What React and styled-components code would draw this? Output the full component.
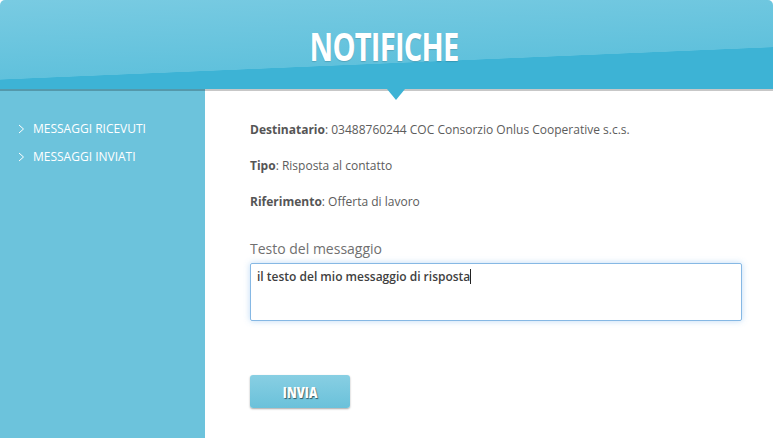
import styled, { createGlobalStyle } from "styled-components";

const Global = createGlobalStyle`
  html, body {
    margin: 0;
    padding: 0;
    background: #ffffff;
    font-family: "Open Sans", "DejaVu Sans", sans-serif;
  }
`;

const Page = styled.div`
  width: 773px;
  height: 438px;
  display: flex;
  flex-direction: column;
  overflow: hidden;
`;

const Header = styled.header`
  position: relative;
  z-index: 1;
  height: 89px;
  flex: none;
  border-radius: 5px 5px 0 0;
  background: linear-gradient(
    177.6deg,
    #79cbe2 0%,
    #60c1dc 65.4%,
    #3db3d5 65.8%,
    #3db3d5 100%
  );
  box-shadow: 0 2px 0 rgba(0, 0, 0, 0.22);
  display: flex;
  align-items: center;
  justify-content: center;
`;

const Title = styled.h1`
  margin: 2px 0 0 -5px;
  color: #ffffff;
  font-family: "Open Sans", sans-serif;
  font-weight: 700;
  font-size: 39px;
  letter-spacing: -1px;
  transform: scaleX(0.745);
  text-shadow: 0 1px 1px rgba(0, 0, 0, 0.15);
`;

const Pointer = styled.span`
  position: absolute;
  left: 387px;
  top: 89px;
  width: 0;
  height: 0;
  border-left: 9px solid transparent;
  border-right: 9px solid transparent;
  border-top: 11px solid #3db3d5;
`;

const Body = styled.div`
  flex: 1;
  display: flex;
`;

const Sidebar = styled.nav`
  width: 205px;
  flex: none;
  background: #6cc3dc;
  padding: 31px 0 0 18px;
  box-sizing: border-box;
  display: flex;
  flex-direction: column;
  gap: 11px;
`;

const NavItem = styled.a`
  display: flex;
  align-items: center;
  gap: 8px;
  color: #ffffff;
  font-size: 12px;
  line-height: 17px;
  font-weight: 500;
  text-transform: uppercase;
  text-decoration: none;
`;

const Chevron = () => (
  <svg width="7" height="10" viewBox="0 0 7 10">
    <path d="M1 1 L5.5 5 L1 9" fill="none" stroke="#ffffff" strokeWidth="1" />
  </svg>
);

const Content = styled.main`
  flex: 1;
  padding: 32px 0 0 45px;
  display: flex;
  flex-direction: column;
  color: #5c5c5c;
`;

const InfoLine = styled.p`
  margin: 0 0 19px;
  font-size: 12px;
  line-height: 17px;
  b {
    font-weight: 700;
    color: #555555;
  }
`;

const Label = styled.label`
  margin-top: 10px;
  font-size: 14px;
  line-height: 20px;
  color: #707070;
`;

const TextBox = styled.div`
  margin-top: 4px;
  width: 492px;
  height: 58px;
  box-sizing: border-box;
  border: 1px solid #86b8e4;
  border-radius: 2px;
  box-shadow: 0 0 6px rgba(110, 175, 235, 0.45);
  padding: 4px 6px;
  font-size: 12px;
  line-height: 18px;
  font-weight: 600;
  color: #3f3f3f;
`;

const Caret = styled.span`
  display: inline-block;
  width: 1px;
  height: 15px;
  background: #222222;
  vertical-align: -3px;
`;

const SendButton = styled.button`
  margin-top: 54px;
  width: 100px;
  height: 33px;
  border: none;
  border-radius: 3px;
  background: linear-gradient(#88cfe3, #6ac1da);
  box-shadow: 0 1px 2px rgba(0, 0, 0, 0.35);
  color: #ffffff;
  font-family: "Open Sans", sans-serif;
  font-weight: 800;
  font-size: 15px;
  text-shadow: 1px 1px 1px rgba(0, 0, 0, 0.55);
  cursor: pointer;
  span {
    display: inline-block;
    transform: scaleX(0.78);
  }
`;

export default function App() {
  return (
    <Page>
      <Global />
      <Header>
        <Title>NOTIFICHE</Title>
        <Pointer />
      </Header>
      <Body>
        <Sidebar>
          <NavItem href="#">
            <Chevron />
            Messaggi ricevuti
          </NavItem>
          <NavItem href="#">
            <Chevron />
            Messaggi inviati
          </NavItem>
        </Sidebar>
        <Content>
          <InfoLine>
            <b>Destinatario</b>: 03488760244 COC Consorzio Onlus Cooperative s.c.s.
          </InfoLine>
          <InfoLine>
            <b>Tipo</b>: Risposta al contatto
          </InfoLine>
          <InfoLine>
            <b>Riferimento</b>: Offerta di lavoro
          </InfoLine>
          <Label>Testo del messaggio</Label>
          <TextBox>
            il testo del mio messaggio di risposta
            <Caret />
          </TextBox>
          <div>
            <SendButton>
              <span>INVIA</span>
            </SendButton>
          </div>
        </Content>
      </Body>
    </Page>
  );
}
